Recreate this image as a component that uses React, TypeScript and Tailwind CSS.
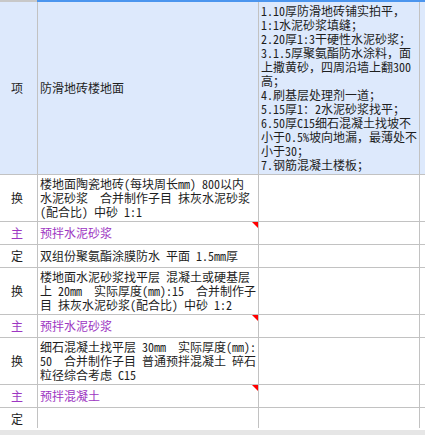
import React from "react";

type Row = {
  code: string;
  lines: string[];
  main?: boolean;
  h: string;
};

const specLines = [
  "1.10厚防滑地砖铺实拍平，",
  "1:1水泥砂浆填缝；",
  "2.20厚1:3干硬性水泥砂浆；",
  "3.1.5厚聚氨酯防水涂料，面",
  "上撒黄砂，四周沿墙上翻300",
  "高；",
  "4.刷基层处理剂一道；",
  "5.15厚1：2水泥砂浆找平；",
  "6.50厚C15细石混凝土找坡不",
  "小于0.5%坡向地漏，最薄处不",
  "小于30；",
  "7.钢筋混凝土楼板；",
];

const rows: Row[] = [
  {
    code: "换",
    h: "h-[47px]",
    lines: [
      "楼地面陶瓷地砖(每块周长mm) 800以内",
      "水泥砂浆　合并制作子目 抹灰水泥砂浆",
      "(配合比) 中砂 1:1",
    ],
  },
  { code: "主", h: "h-[23px]", main: true, lines: ["预拌水泥砂浆"] },
  { code: "定", h: "h-[23px]", lines: ["双组份聚氨酯涂膜防水 平面 1.5mm厚"] },
  {
    code: "换",
    h: "h-[47px]",
    lines: [
      "楼地面水泥砂浆找平层 混凝土或硬基层",
      "上 20mm　实际厚度(mm):15　合并制作子",
      "目 抹灰水泥砂浆(配合比) 中砂 1:2",
    ],
  },
  { code: "主", h: "h-[23px]", main: true, lines: ["预拌水泥砂浆"] },
  {
    code: "换",
    h: "h-[47px]",
    lines: [
      "细石混凝土找平层 30mm　实际厚度(mm):",
      "50　合并制作子目 普通预拌混凝土 碎石",
      "粒径综合考虑 C15",
    ],
  },
  { code: "主", h: "h-[23px]", main: true, lines: ["预拌混凝土"] },
  { code: "定", h: "h-[23px]", lines: [] },
];

const cell = "border-r border-b border-[#c2c2c2]";

export default function App() {
  return (
    <div
      className="w-[425px] h-[435px] bg-white text-[12px] leading-[14px] text-[#1e1e1e] overflow-hidden"
      style={{
        fontFamily:
          '"Noto Sans Mono CJK SC", "Noto Sans CJK SC", "DejaVu Sans Mono", monospace',
      }}
    >
      <div className="h-[428px] overflow-hidden">
        {/* header strip */}
        <div className="flex h-[2px]">
          <div className="w-[37px] bg-[#c8c8c8]" />
          <div className="flex-1 bg-[#4b95ee]" />
        </div>

        {/* item row */}
        <div className="flex h-[173px] bg-[#dde9fc]">
          <div className={`${cell} w-[38px] flex items-center pl-[11px]`}>项</div>
          <div className={`${cell} w-[221px] flex items-center pl-[2px]`}>防滑地砖楼地面</div>
          <div className={`${cell} w-[161px] flex flex-col justify-center pl-[2px] overflow-hidden`}>
            {specLines.map((l, i) => (
              <div key={i} className="whitespace-nowrap">
                {l}
              </div>
            ))}
          </div>
          <div className="flex-1 border-b border-[#c2c2c2]" />
        </div>

        {rows.map((r, i) => (
          <div key={i} className={`flex ${r.h}`}>
            <div
              className={`${cell} w-[38px] flex items-center pl-[11px] ${
                r.main ? "text-[#9d36c2]" : ""
              }`}
            >
              {r.code}
            </div>
            <div
              className={`${cell} relative w-[221px] flex flex-col justify-center pl-[2px] overflow-hidden ${
                r.main ? "text-[#9d36c2]" : ""
              }`}
            >
              {r.lines.map((l, j) => (
                <div key={j} className="whitespace-nowrap">
                  {l}
                </div>
              ))}
              {r.main && (
                <div className="absolute top-0 right-0 w-0 h-0 border-t-[6px] border-l-[6px] border-t-[#ff0000] border-l-transparent" />
              )}
            </div>
            <div className={`${cell} w-[161px]`} />
            <div className="flex-1 border-b border-[#c2c2c2]" />
          </div>
        ))}
      </div>
      <div className="h-[2px] bg-white" />
      <div className="h-[5px] bg-[#e6e6e6]" />
    </div>
  );
}
